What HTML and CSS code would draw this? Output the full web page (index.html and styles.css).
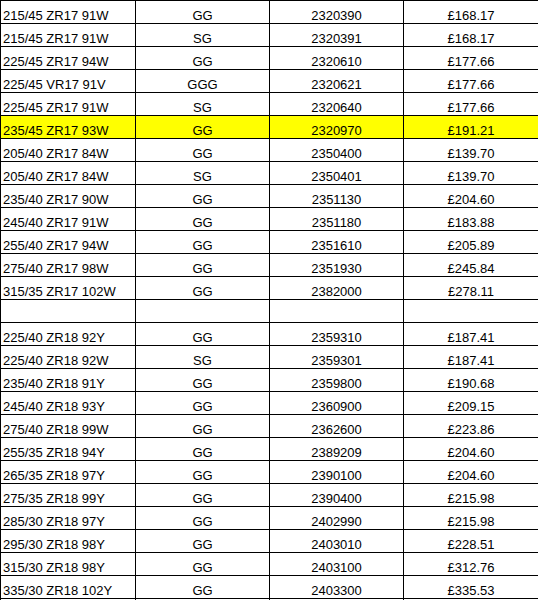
FILE: index.html
```html
<!DOCTYPE html>
<html>
<head>
<meta charset="utf-8">
<link rel="stylesheet" href="styles.css">
</head>
<body>
<table class="tyres">
<colgroup><col class="c1"><col class="c2"><col class="c3"><col class="c4"></colgroup>
<tbody>
<tr><td class="size">215/45 ZR17 91W</td><td>GG</td><td>2320390</td><td>£168.17</td></tr>
<tr><td class="size">215/45 ZR17 91W</td><td>SG</td><td>2320391</td><td>£168.17</td></tr>
<tr><td class="size">225/45 ZR17 94W</td><td>GG</td><td>2320610</td><td>£177.66</td></tr>
<tr><td class="size">225/45 VR17 91V</td><td>GGG</td><td>2320621</td><td>£177.66</td></tr>
<tr><td class="size">225/45 ZR17 91W</td><td>SG</td><td>2320640</td><td>£177.66</td></tr>
<tr class="hl"><td class="size">235/45 ZR17 93W</td><td>GG</td><td>2320970</td><td>£191.21</td></tr>
<tr><td class="size">205/40 ZR17 84W</td><td>GG</td><td>2350400</td><td>£139.70</td></tr>
<tr><td class="size">205/40 ZR17 84W</td><td>SG</td><td>2350401</td><td>£139.70</td></tr>
<tr><td class="size">235/40 ZR17 90W</td><td>GG</td><td>2351130</td><td>£204.60</td></tr>
<tr><td class="size">245/40 ZR17 91W</td><td>GG</td><td>2351180</td><td>£183.88</td></tr>
<tr><td class="size">255/40 ZR17 94W</td><td>GG</td><td>2351610</td><td>£205.89</td></tr>
<tr><td class="size">275/40 ZR17 98W</td><td>GG</td><td>2351930</td><td>£245.84</td></tr>
<tr><td class="size">315/35 ZR17 102W</td><td>GG</td><td>2382000</td><td>£278.11</td></tr>
<tr><td class="size"></td><td></td><td></td><td></td></tr>
<tr><td class="size">225/40 ZR18 92Y</td><td>GG</td><td>2359310</td><td>£187.41</td></tr>
<tr><td class="size">225/40 ZR18 92W</td><td>SG</td><td>2359301</td><td>£187.41</td></tr>
<tr><td class="size">235/40 ZR18 91Y</td><td>GG</td><td>2359800</td><td>£190.68</td></tr>
<tr><td class="size">245/40 ZR18 93Y</td><td>GG</td><td>2360900</td><td>£209.15</td></tr>
<tr><td class="size">275/40 ZR18 99W</td><td>GG</td><td>2362600</td><td>£223.86</td></tr>
<tr><td class="size">255/35 ZR18 94Y</td><td>GG</td><td>2389209</td><td>£204.60</td></tr>
<tr><td class="size">265/35 ZR18 97Y</td><td>GG</td><td>2390100</td><td>£204.60</td></tr>
<tr><td class="size">275/35 ZR18 99Y</td><td>GG</td><td>2390400</td><td>£215.98</td></tr>
<tr><td class="size">285/30 ZR18 97Y</td><td>GG</td><td>2402990</td><td>£215.98</td></tr>
<tr><td class="size">295/30 ZR18 98Y</td><td>GG</td><td>2403010</td><td>£228.51</td></tr>
<tr><td class="size">315/30 ZR18 98Y</td><td>GG</td><td>2403100</td><td>£312.76</td></tr>
<tr><td class="size">335/30 ZR18 102Y</td><td>GG</td><td>2403300</td><td>£335.53</td></tr>
<tr><td class="size"></td><td></td><td></td><td></td></tr>
</tbody>
</table>
</body>
</html>
```
FILE: styles.css
```css
html, body {
  margin: 0;
  padding: 0;
  background: #ffffff;
}
.tyres {
  border-collapse: collapse;
  table-layout: fixed;
  width: 538px;
  font-family: "Liberation Sans", Arial, sans-serif;
  font-size: 13px;
  color: #000;
}
.c1 { width: 135px; }
.c2 { width: 134px; }
.c3 { width: 134px; }
.c4 { width: 135px; }
.tyres td {
  border: 1px solid #000;
  height: 22px;
  padding: 0 2px;
  line-height: 15px;
  vertical-align: bottom;
  text-align: center;
  white-space: nowrap;
  overflow: hidden;
}
.tyres td.size {
  text-align: left;
  padding-left: 2px;
}
.tyres tr.hl td {
  background: #ffff00;
}
```
